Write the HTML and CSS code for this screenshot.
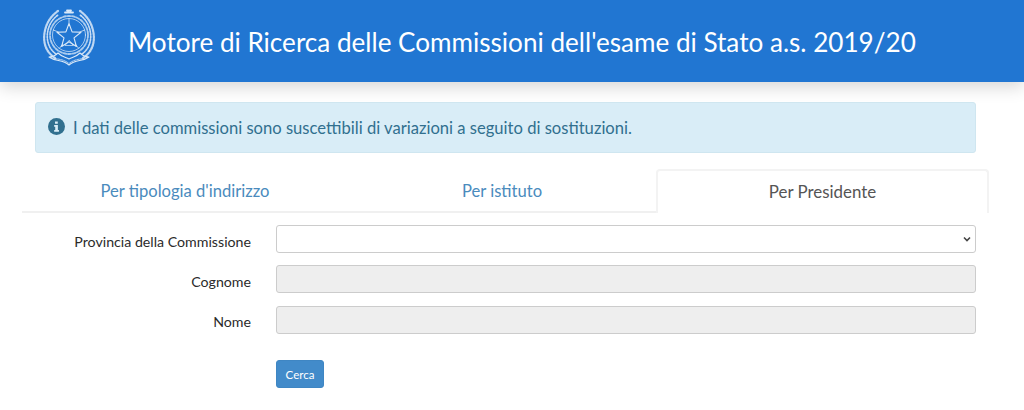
FILE: index.html
```html
<!DOCTYPE html>
<html lang="it">
<head>
  <meta charset="UTF-8">
  <meta name="viewport" content="width=device-width, initial-scale=1.0">
  <title>Motore di Ricerca delle Commissioni</title>
  <link rel="stylesheet" href="styles.css">
</head>
<body>
  <header class="top-bar">
    <svg class="emblem" viewBox="0 0 52 60" width="52" height="60" aria-hidden="true">
      <g fill="none" stroke="#dbe9f8" stroke-linecap="round" stroke-linejoin="round">
        <!-- wreath -->
        <path d="M12 50C3 44 0 35 1.500 25 3 15 8 8 15 3" stroke-width="2.200" stroke-dasharray="2 1" opacity=".85"/>
        <path d="M13 46C6 41 3.500 33 4.500 25 5.500 17 9.500 11 15 7" stroke-width="1.600" stroke-dasharray="1.500 1.200" opacity=".9"/>
        <path d="M40 50C49 44 52 35 50.500 25 49 15 44 8 37 3" stroke-width="2.200" stroke-dasharray="2 1" opacity=".85"/>
        <path d="M39 46C46 41 48.500 33 47.500 25 46.500 17 42.500 11 37 7" stroke-width="1.600" stroke-dasharray="1.500 1.200" opacity=".9"/>
        <!-- cog -->
        <circle cx="26" cy="27" r="19" stroke-width="1.800" stroke-dasharray="3 1.600" opacity=".75"/>
        <circle cx="26" cy="27" r="16.500" stroke-width=".8" opacity=".9"/>
        <path d="M26 10.500V15M10.300 22l5 2M41.700 22l-5 2M16.300 40.400l3.200-4M35.700 40.400l-3.200-4" stroke-width=".8"/>
        <!-- star -->
        <path d="M26 15.500l3.100 8.400 8.900.4-7 5.600 2.400 8.600L26 33.700l-7.400 4.800 2.400-8.600-7-5.600 8.900-.4z" stroke-width="1.100"/>
        <path d="M26 32.500l-4 5h8z" stroke-width=".7"/>
        <!-- top of cog -->
        <path d="M22 4.500h8M24 2.500h4" stroke-width="1.800" stroke-dasharray="1.500 1"/>
        <!-- ribbon -->
        <path d="M6 49c7 5 13 2 20 8 7-6 13-3 20-8-5 0-7-2-9-4-4 4-7 4-11 6-4-2-7-2-11-6-2 2-4 4-9 4z" stroke-width="1.100"/>
        <path d="M12 50.500c5 1 9 1 14 5 5-4 9-4 14-5" stroke-width=".8" stroke-dasharray="2 1"/>
      </g>
    </svg>
    <h1 class="page-title">Motore di Ricerca delle Commissioni dell'esame di Stato a.s. 2019/20</h1>
  </header>

  <main class="content">
    <div class="alert">
      <svg class="alert-icon" viewBox="0 0 16 16" width="17" height="17" aria-hidden="true">
        <circle cx="8" cy="8" r="8" fill="#31708f"/>
        <path d="M6.600 3.200h2.600v2.300H6.600zM5.800 6.700h3.500v4.700h1v1.500H5.800v-1.500h1V8.200h-1z" fill="#d9edf7"/>
      </svg>
      <span>I dati delle commissioni sono suscettibili di variazioni a seguito di sostituzioni.</span>
    </div>

    <nav class="tabs">
      <a class="tab tab-first">Per tipologia d'indirizzo</a>
      <a class="tab tab-second">Per istituto</a>
      <a class="tab tab-third active">Per Presidente</a>
    </nav>

    <form class="search-form">
      <label class="field-label">Provincia della Commissione</label>
      <select class="field field-select"><option></option></select>
      <label class="field-label">Cognome</label>
      <input class="field" type="text" disabled>
      <label class="field-label">Nome</label>
      <input class="field" type="text" disabled>
      <button class="button" type="button">Cerca</button>
    </form>
  </main>
</body>
</html>
```

FILE: styles.css
```css
:root {
  --primary: #2176d2;
  --link: #4a8bbd;
  --text: #2b2b2b;
  --border: #cccccc;
}

html, body {
  height: 410px;
  overflow: hidden;
}

body {
  margin: 0;
  font-family: 'Lato', sans-serif;
  color: var(--text);
  background-color: #ffffff;
}

.top-bar {
  height: 82px;
  display: flex;
  align-items: center;
  background-color: var(--primary);
  box-shadow: 0 5px 16px rgba(0, 0, 0, 0.16);
}

.emblem {
  margin-left: 43px;
  margin-top: -7px;
}

.page-title {
  margin: 2px 0 0 33px;
  font-size: 26.100px;
  font-weight: 400;
  color: #ffffff;
  white-space: nowrap;
}

.content {
  padding: 20px 48px 0 35px;
}

.alert {
  height: 51px;
  box-sizing: border-box;
  display: flex;
  align-items: center;
  gap: 8px;
  padding: 0 12px;
  background-color: #d9edf7;
  border: 1px solid #cfe6f0;
  border-radius: 3px;
  color: #31708f;
  font-size: 16.600px;
}

.alert-icon {
  margin-top: -3px;
}

.tabs {
  display: flex;
  margin: 16px -13px 0 -13px;
  height: 44px;
  font-size: 16.600px;
}

.tab {
  display: flex;
  align-items: center;
  justify-content: center;
  box-sizing: border-box;
  padding-top: 2px;
  color: var(--link);
  border-bottom: 2px solid #f0f0f0;
}

.tab-first {
  width: 326px;
}

.tab-second {
  width: 308px;
}

.tab-third {
  width: 333px;
  padding-top: 0;
  padding-bottom: 2px;
}

.tab.active {
  color: #555555;
  border: 2px solid #f3f3f3;
  border-bottom: none;
  border-radius: 4px 4px 0 0;
  font-size: 16.900px;
}

.search-form {
  display: grid;
  grid-template-columns: 216px 1fr;
  column-gap: 25px;
  row-gap: 12.400px;
  align-items: center;
  margin-top: 12px;
}

.field-label {
  padding-top: 4px;
  text-align: right;
  font-size: 14.200px;
}

.field {
  box-sizing: border-box;
  width: 100%;
  height: 28px;
  margin: 0;
  padding: 0 4px;
  background-color: #ffffff;
  border: 1px solid var(--border);
  border-radius: 3px;
}

.field-select {
  appearance: none;
  background-image: url("data:image/svg+xml,%3Csvg xmlns='http://www.w3.org/2000/svg' width='8' height='6'%3E%3Cpath d='M1 1.500l3 3 3-3' fill='none' stroke='%23444' stroke-width='1.600'/%3E%3C/svg%3E");
  background-repeat: no-repeat;
  background-position: right 4px center;
}

.field:disabled {
  background-color: #eeeeee;
}

.button {
  grid-column: 2;
  justify-self: start;
  width: 48px;
  height: 28px;
  margin-top: 14px;
  padding: 0;
  background-color: #428bca;
  border: 1px solid #3f86c3;
  border-radius: 3px;
  color: #ffffff;
  font-family: inherit;
  font-size: 11.500px;
}
```
